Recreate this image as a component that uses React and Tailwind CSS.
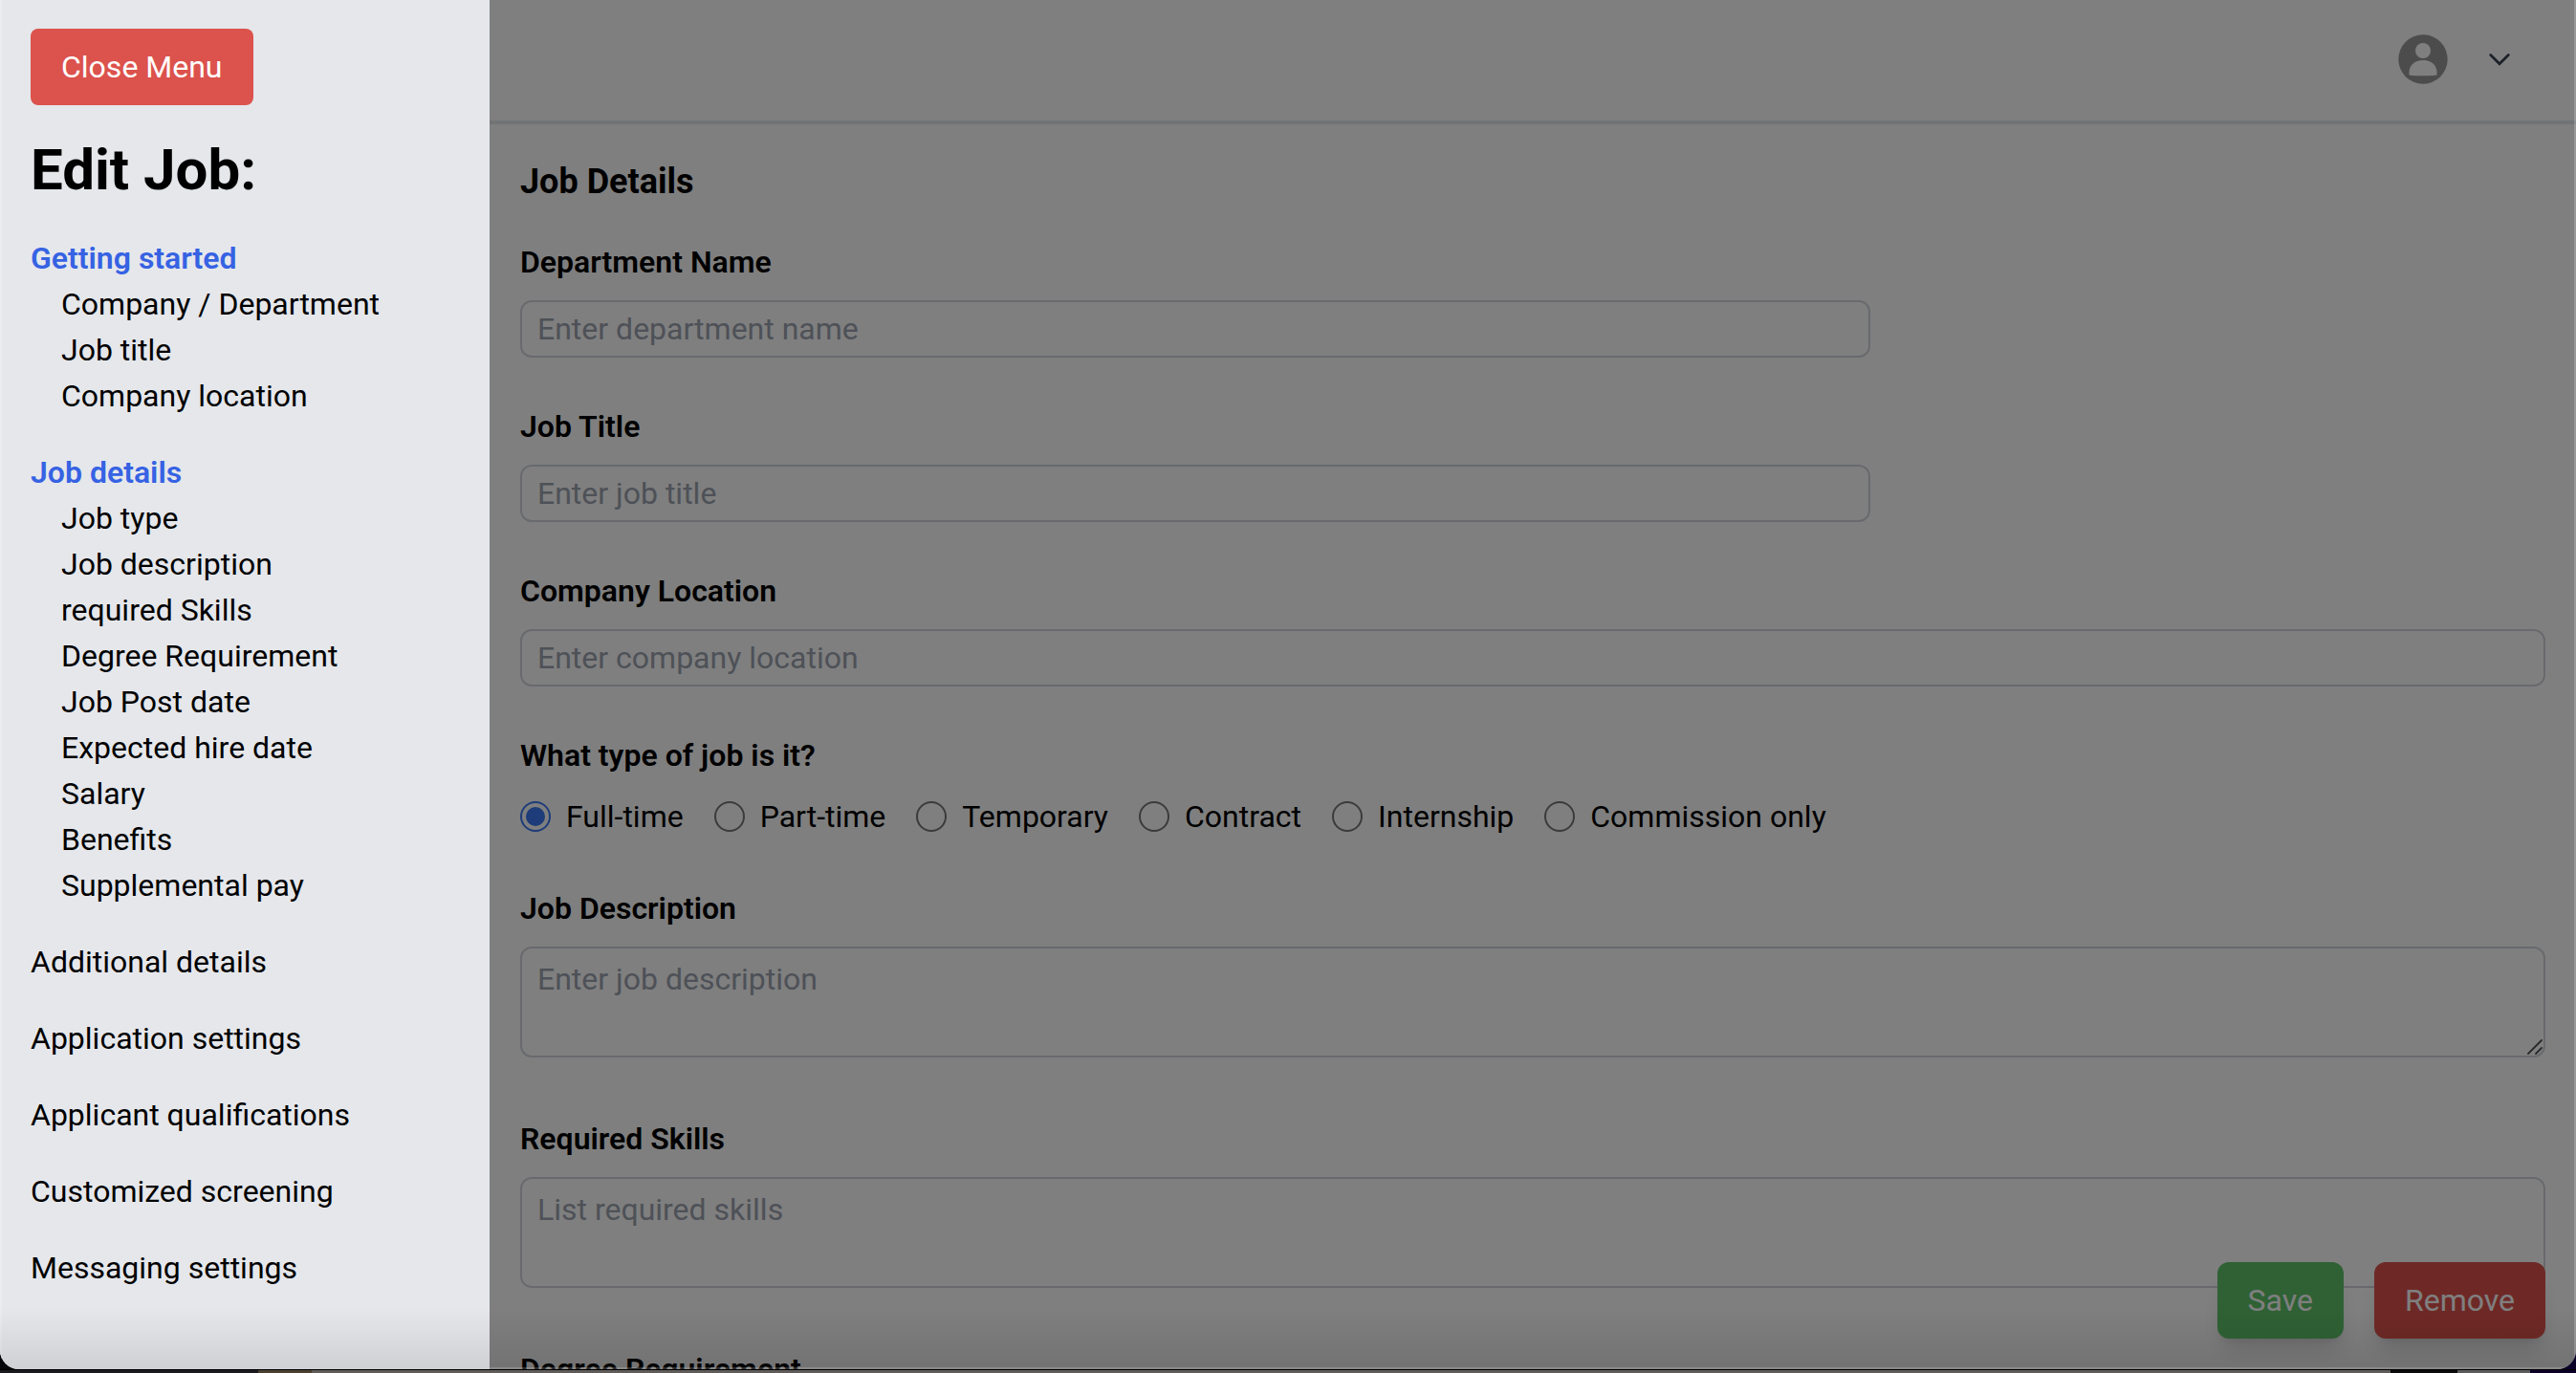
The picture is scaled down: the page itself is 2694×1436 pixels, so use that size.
const sections = [
  { title: "Getting started", items: ["Company / Department", "Job title", "Company location"] },
  {
    title: "Job details",
    items: [
      "Job type",
      "Job description",
      "required Skills",
      "Degree Requirement",
      "Job Post date",
      "Expected hire date",
      "Salary",
      "Benefits",
      "Supplemental pay",
    ],
  },
];

const links = [
  "Additional details",
  "Application settings",
  "Applicant qualifications",
  "Customized screening",
  "Messaging settings",
];

const jobTypes = ["Full-time", "Part-time", "Temporary", "Contract", "Internship", "Commission only"];

function Sidebar() {
  return (
    <aside className="z-20 w-[512px] shrink-0 overflow-hidden border-l-2 border-[#ebecef] bg-[#e5e7eb] pt-[30px] pr-8 pl-[30px]">
      <button type="button" className="mb-8 rounded-lg bg-[#dc524c] px-8 py-4 text-white">
        Close Menu
      </button>
      <h1 className="mb-8 text-[60px] leading-[72px] font-bold">Edit Job:</h1>
      <nav className="flex flex-col gap-8">
        {sections.map((section) => (
          <div key={section.title}>
            <a href="#" className="block font-semibold text-[#3662e3]">
              {section.title}
            </a>
            <ul className="pl-8">
              {section.items.map((item) => (
                <li key={item}>
                  <a href="#">{item}</a>
                </li>
              ))}
            </ul>
          </div>
        ))}
        {links.map((link) => (
          <a key={link} href="#">
            {link}
          </a>
        ))}
      </nav>
    </aside>
  );
}

function TopBar() {
  return (
    <header className="flex h-[130px] items-center justify-end gap-[38px] border-b-4 border-[#e5e7eb] pr-16 pb-0.5">
      <button type="button" aria-label="Account">
        <svg viewBox="0 0 52 52" className="size-[52px]">
          <circle cx="26" cy="26" r="25.7" fill="#999" />
          <circle cx="26" cy="17" r="8" fill="#fff" />
          <path
            d="M11.5 42.5v-2.8C11.5 32.5 17 27 26 27s14.500 5.500 14.500 12.700v2.800C36.500 43.200 31.500 43.300 26 43.300s-10.500-.1-14.500-.8Z"
            fill="#fff"
          />
        </svg>
      </button>
      <button type="button" aria-label="Open account menu">
        <svg viewBox="0 0 32 32" className="size-8" fill="none" stroke="#3a4352" strokeWidth="2.700" strokeLinecap="round">
          <path d="M6.700 11.500 16 20.800l9.300-9.300" />
        </svg>
      </button>
    </header>
  );
}

function TextField({ id, label, placeholder, wide }) {
  return (
    <div className="mb-12">
      <label htmlFor={id} className="mb-4 block font-semibold">
        {label}
      </label>
      <input
        id={id}
        type="text"
        placeholder={placeholder}
        className={
          (wide ? "w-full" : "w-2/3") +
          " block rounded-xl border-2 border-[#d1d5db] px-4 py-1 placeholder:text-[#9ca3af]"
        }
      />
    </div>
  );
}

function TextArea({ id, label, placeholder }) {
  return (
    <div className="mb-[61px]">
      <label htmlFor={id} className="mb-4 block font-semibold">
        {label}
      </label>
      <div className="relative">
        <textarea
          id={id}
          rows={2}
          placeholder={placeholder}
          className="block w-full resize-none rounded-xl border-2 border-[#d1d5db] px-4 py-2 placeholder:text-[#9ca3af]"
        />
        <svg
          viewBox="0 0 16 16"
          className="pointer-events-none absolute right-[3px] bottom-[3px] size-4"
          stroke="#555"
          strokeWidth="1.800"
          strokeLinecap="round"
        >
          <path d="M1 15 15 1M9 15l6-6" />
        </svg>
      </div>
    </div>
  );
}

function JobForm() {
  return (
    <form className="p-8">
      <h2 className="mb-8 text-4xl leading-[56px] font-bold">Job Details</h2>
      <TextField id="department" label="Department Name" placeholder="Enter department name" />
      <TextField id="title" label="Job Title" placeholder="Enter job title" />
      <TextField id="location" label="Company Location" placeholder="Enter company location" wide />
      <fieldset className="mb-12">
        <legend className="mb-4 font-semibold">What type of job is it?</legend>
        <div className="flex gap-8">
          {jobTypes.map((type, index) => (
            <label key={type} className="flex items-center gap-4">
              <input
                type="radio"
                name="jobType"
                defaultChecked={index === 0}
                className="grid size-8 appearance-none place-content-center rounded-full border-2 border-[#767676] checked:border-[#3a78f2] before:size-5 before:rounded-full checked:before:bg-[#3a78f2]"
              />
              {type}
            </label>
          ))}
        </div>
      </fieldset>
      <TextArea id="description" label="Job Description" placeholder="Enter job description" />
      <TextArea id="skills" label="Required Skills" placeholder="List required skills" />
      <label htmlFor="degree" className="block font-semibold">
        Degree Requirement
      </label>
      <input id="degree" type="text" className="mt-4 block w-full rounded-xl border-2 border-[#d1d5db] px-4 py-1" />
    </form>
  );
}

export default function App() {
  return (
    <div className="flex h-screen flex-col overflow-hidden bg-linear-to-r from-[#050608] to-[#0c0028] font-[Roboto,sans-serif] text-[32px] leading-[48px] text-black">
      <div className="relative flex min-h-0 flex-1 overflow-hidden rounded-b-[20px] bg-white">
        <Sidebar />
        <main className="min-w-0 flex-1 overflow-hidden">
          <TopBar />
          <JobForm />
        </main>
        <div className="absolute right-8 bottom-8 flex gap-8 text-white">
          <button type="button" className="rounded-xl bg-[#5ec269] px-8 py-4 shadow-xl">
            Save
          </button>
          <button type="button" className="rounded-xl bg-[#dc524c] px-8 py-4 shadow-xl">
            Remove
          </button>
        </div>
        <div className="absolute inset-0 z-10 border-r-2 border-b-2 border-white/20 bg-black/50" />
        <div className="pointer-events-none absolute inset-x-0 bottom-0 z-30 h-16 bg-linear-to-t from-black/10 to-transparent" />
      </div>
      <div className="flex h-1 shrink-0 border-t border-black">
        <div className="w-[270px] bg-[#1b1b1f]" />
        <div className="w-[56px] bg-[#4a4030]" />
        <div className="flex-1 bg-[#5f5c59]" />
        <div className="w-[70px] bg-[#0a0a0a]" />
        <div className="w-[76px] bg-[#5c5c5c]" />
        <div className="w-12 bg-[#0c0028]" />
      </div>
    </div>
  );
}
